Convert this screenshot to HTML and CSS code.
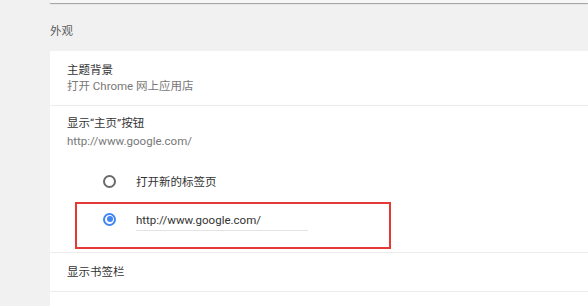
FILE: index.html
```html
<!DOCTYPE html>
<html lang="zh-CN">
<head>
<meta charset="utf-8">
<link rel="stylesheet" href="styles.css">
</head>
<body>
<div class="page">
  <div class="top-card"></div>
  <div class="section-title">外观</div>
  <div class="card">
    <div class="row row-theme">
      <div class="label">主题背景</div>
      <div class="sub">打开 Chrome 网上应用店</div>
    </div>
    <div class="row row-home">
      <div class="label">显示“主页”按钮</div>
      <div class="sub sub-home">http://www.google.com/</div>
      <div class="radio-list">
        <div class="radio-row">
          <span class="radio"></span>
          <span class="radio-label">打开新的标签页</span>
        </div>
        <div class="radio-row">
          <span class="radio checked"></span>
          <span class="url-input">http://www.google.com/</span>
        </div>
      </div>
      <div class="highlight"></div>
    </div>
    <div class="row row-bookmarks">
      <div class="label">显示书签栏</div>
    </div>
    <div class="row row-empty"></div>
  </div>
</div>
</body>
</html>
```
FILE: styles.css
```css
html, body {
  margin: 0;
  padding: 0;
}
body {
  background: #f1f1f1;
  width: 588px;
  height: 306px;
  overflow: hidden;
  font-family: Roboto, "Noto Sans CJK SC", sans-serif;
  font-size: 11.5px;
  color: #333;
}
.page {
  margin-left: 50px;
  width: 538px;
}
.top-card {
  height: 3px;
  background: #f7f7f7;
  box-shadow: 0 1px 1px rgba(0,0,0,0.35);
}
.section-title {
  height: 48px;
  line-height: 16px;
  padding-top: 20px;
  box-sizing: border-box;
  color: #5f5f5f;
  font-size: 11.5px;
}
.card {
  background: #fff;
}
.row {
  padding-left: 17px;
  border-bottom: 1px solid #ececec;
  position: relative;
}
.label {
  line-height: 16px;
  color: #333;
}
.sub {
  line-height: 16px;
  color: #777;
}
.row-theme {
  height: 55px;
  box-sizing: border-box;
  padding-top: 11px;
}
.row-home {
  height: 147px;
  box-sizing: border-box;
  padding-top: 9px;
}
.sub-home {
  margin-top: 2px;
}
.radio-list {
  margin-top: 13px;
  padding-left: 36px;
}
.radio-row {
  display: flex;
  align-items: center;
  height: 38px;
}
.radio {
  width: 9px;
  height: 9px;
  border: 2px solid #6a6a6a;
  border-radius: 50%;
  position: relative;
  flex: none;
}
.radio.checked {
  border-color: #4285f4;
}
.radio.checked::after {
  content: "";
  position: absolute;
  left: 1.5px;
  top: 1.5px;
  width: 6px;
  height: 6px;
  border-radius: 50%;
  background: #4285f4;
}
.radio-label {
  margin-left: 20px;
  color: #333;
}
.url-input {
  margin-left: 20px;
  width: 172px;
  padding-top: 2px;
  padding-bottom: 2px;
  border-bottom: 1px solid #e3e3e3;
  color: #333;
  line-height: 16px;
  margin-top: 3px;
}
.highlight {
  position: absolute;
  left: 25px;
  top: 96px;
  width: 312px;
  height: 43px;
  border: 2px solid #e53935;
}
.row-bookmarks {
  height: 39px;
  box-sizing: border-box;
  display: flex;
  align-items: center;
}
.row-empty {
  height: 14px;
  border-bottom: none;
}
```
